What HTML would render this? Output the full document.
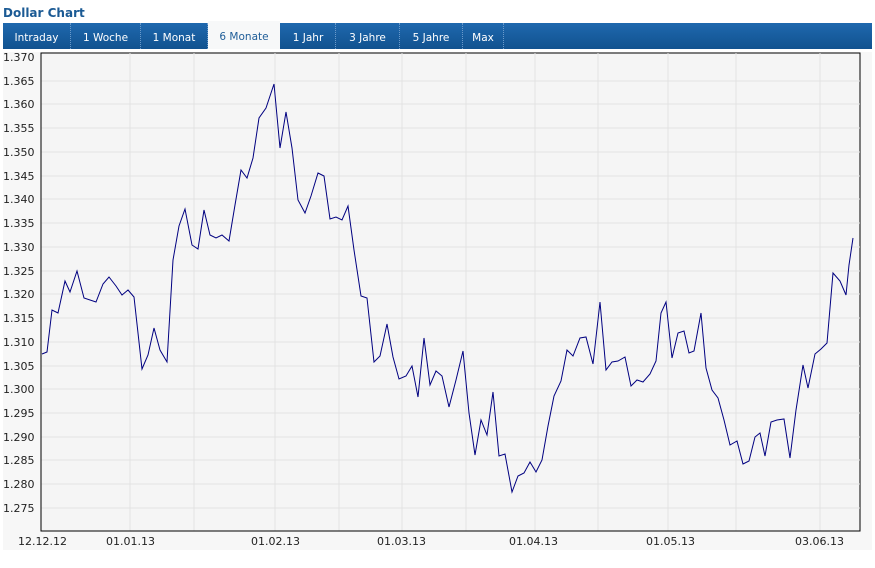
<!DOCTYPE html>
<html><head><meta charset="utf-8"><style>
body{margin:0;width:875px;height:568px;background:#fff;font-family:Verdana,"DejaVu Sans",sans-serif;position:relative;overflow:hidden}
.t{position:absolute;left:3px;top:6px;font-size:12px;font-weight:bold;color:#1b5a94}
.bar{position:absolute;left:3px;top:23px;width:869px;height:26px;background:linear-gradient(#1f68ae,#11528f)}
.tab{position:absolute;top:0;height:26px;line-height:30px;font-size:10.5px;color:#fff;border-right:1px dotted #6a9acb;text-align:center}
.act{background:#f7f8f9;color:#1f5d98;top:-2px;height:28px;line-height:33px;border-right:none}
</style></head><body>
<div class="t">Dollar Chart</div>
<div class="bar">
<div class="tab" style="left:0;width:67px">Intraday</div>
<div class="tab" style="left:68px;width:69px">1 Woche</div>
<div class="tab" style="left:138px;width:66px">1 Monat</div>
<div class="tab act" style="left:205px;width:72px">6 Monate</div>
<div class="tab" style="left:278px;width:54px">1 Jahr</div>
<div class="tab" style="left:333px;width:63px">3 Jahre</div>
<div class="tab" style="left:397px;width:62px">5 Jahre</div>
<div class="tab" style="left:460px;width:40px">Max</div>
</div>
<svg width="875" height="568" style="position:absolute;left:0;top:0" font-family="Verdana,'DejaVu Sans',sans-serif" font-size="11" fill="#222">
<rect x="3" y="52" width="869" height="498" fill="#f7f7f7"/>
<rect x="41" y="53" width="819" height="478" fill="#f5f5f5" stroke="#000"/>
<g stroke="#e2e2e2">
<line x1="130" y1="53" x2="130" y2="531"/><line x1="194" y1="53" x2="194" y2="531"/><line x1="275" y1="53" x2="275" y2="531"/><line x1="339" y1="53" x2="339" y2="531"/><line x1="402" y1="53" x2="402" y2="531"/><line x1="466" y1="53" x2="466" y2="531"/><line x1="535" y1="53" x2="535" y2="531"/><line x1="598" y1="53" x2="598" y2="531"/><line x1="668" y1="53" x2="668" y2="531"/><line x1="736" y1="53" x2="736" y2="531"/><line x1="820" y1="53" x2="820" y2="531"/>
<line x1="41" y1="81" x2="860" y2="81"/><line x1="41" y1="104" x2="860" y2="104"/><line x1="41" y1="128" x2="860" y2="128"/><line x1="41" y1="152" x2="860" y2="152"/><line x1="41" y1="176" x2="860" y2="176"/><line x1="41" y1="199" x2="860" y2="199"/><line x1="41" y1="223" x2="860" y2="223"/><line x1="41" y1="247" x2="860" y2="247"/><line x1="41" y1="271" x2="860" y2="271"/><line x1="41" y1="294" x2="860" y2="294"/><line x1="41" y1="318" x2="860" y2="318"/><line x1="41" y1="342" x2="860" y2="342"/><line x1="41" y1="366" x2="860" y2="366"/><line x1="41" y1="389" x2="860" y2="389"/><line x1="41" y1="413" x2="860" y2="413"/><line x1="41" y1="437" x2="860" y2="437"/><line x1="41" y1="460" x2="860" y2="460"/><line x1="41" y1="484" x2="860" y2="484"/><line x1="41" y1="508" x2="860" y2="508"/>
</g>
<line x1="41" y1="531" x2="860" y2="531" stroke="#000"/>
<line x1="41" y1="53" x2="41" y2="531" stroke="#000"/>
<g>
<text x="3" y="61">1.370</text><text x="3" y="85">1.365</text><text x="3" y="108">1.360</text><text x="3" y="132">1.355</text><text x="3" y="156">1.350</text><text x="3" y="180">1.345</text><text x="3" y="203">1.340</text><text x="3" y="227">1.335</text><text x="3" y="251">1.330</text><text x="3" y="275">1.325</text><text x="3" y="298">1.320</text><text x="3" y="322">1.315</text><text x="3" y="346">1.310</text><text x="3" y="370">1.305</text><text x="3" y="393">1.300</text><text x="3" y="417">1.295</text><text x="3" y="441">1.290</text><text x="3" y="464">1.285</text><text x="3" y="488">1.280</text><text x="3" y="512">1.275</text>
<text x="18" y="545">12.12.12</text><text x="106" y="545">01.01.13</text><text x="251" y="545">01.02.13</text><text x="377" y="545">01.03.13</text><text x="509" y="545">01.04.13</text><text x="646" y="545">01.05.13</text><text x="795" y="545">03.06.13</text>
</g>
<polyline fill="none" stroke="#000080" stroke-width="1" points="42,354 47,352 52,310 58,313 65,281 70,292 77,271 84,298 96,302 103,284 109,277 116,286 122,295 128,290 134,297 142,369 148,355 154,328 160,350 167,362 173,260 179,226 185,209 192,245 198,249 204,210 210,235 216,238 222,235 229,241 235,205 241,170 247,178 253,158 259,118 266,108 274,84 280,148 286,112 292,148 298,200 305,213 311,196 318,173 324,176 330,219 336,217 342,220 348,206 354,250 361,296 367,298 374,362 380,356 387,324 393,357 399,379 406,376 412,366 418,397 424,338 430,385 436,371 442,376 449,407 456,380 463,351 469,413 475,455 481,420 487,435 493,392 499,456 505,454 512,492 518,476 524,473 530,462 536,472 542,460 548,426 554,396 561,381 567,350 573,356 580,338 586,337 593,364 600,302 606,370 612,362 618,361 625,357 631,386 637,380 643,382 650,374 656,361 661,313 666,302 672,358 678,333 684,331 689,353 694,351 701,313 706,368 712,390 718,398 724,420 730,445 737,441 743,464 749,461 755,437 760,433 765,456 771,422 777,420 784,419 790,458 796,410 803,365 808,388 815,354 821,349 827,343 833,273 840,281 846,295 849,265 853,238"/>
</svg>
</body></html>
